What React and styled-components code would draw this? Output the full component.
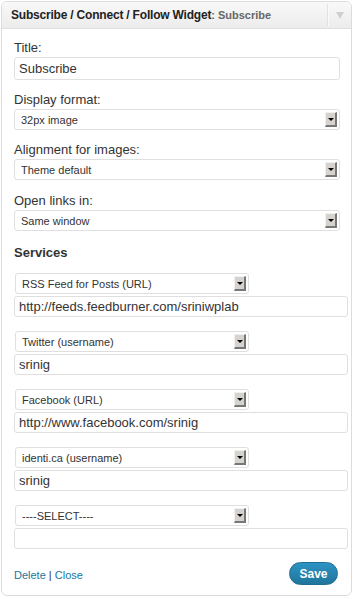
import styled, { createGlobalStyle } from "styled-components";

const GlobalStyle = createGlobalStyle`
  html, body {
    margin: 0;
    padding: 0;
    background: #fff;
    font-family: "Liberation Sans", Arial, sans-serif;
  }
`;

const Widget = styled.div`
  margin: 1px 2px 0 1px;
  border: 1px solid #dcdcdc;
  border-radius: 6px;
  background: #fff;
  overflow: hidden;
`;

const Header = styled.div`
  display: flex;
  height: 26px;
  background: linear-gradient(#f9f9f9, #ececec);
  border-bottom: 1px solid #dfdfdf;
`;

const HeaderTitle = styled.div`
  flex: 1;
  padding-left: 9px;
  line-height: 26px;
  font-size: 12px;
  font-weight: bold;
  letter-spacing: -0.2px;
  color: #222;
  white-space: nowrap;
`;

const HeaderSub = styled.span`
  font-size: 11px;
  letter-spacing: 0;
  color: #666;
`;

const Toggle = styled.div`
  width: 22px;
  border-left: 1px solid #fafafa;
  box-shadow: -1px 0 0 #e2e2e2;
  display: flex;
  align-items: center;
  justify-content: center;
  margin: 2px 0;

  &::after {
    content: "";
    border-left: 4px solid transparent;
    border-right: 4px solid transparent;
    border-top: 7px solid #cfcfcf;
  }
`;

const Body = styled.div`
  padding: 11px 12px 10px 12px;
  display: flex;
  flex-direction: column;
`;

const Field = styled.div`
  display: flex;
  flex-direction: column;
  gap: 2px;
  margin-bottom: ${(p) => p.$after || 12}px;
`;

const Label = styled.label`
  font-size: 13px;
  line-height: 15px;
  color: #333;
`;

const SectionTitle = styled.div`
  font-size: 13px;
  font-weight: bold;
  color: #333;
  line-height: 15px;
  margin-bottom: 13px;
`;

const Input = styled.div`
  box-sizing: border-box;
  height: ${(p) => p.$h || 21}px;
  width: ${(p) => p.$w || 326}px;
  border: 1px solid #dfdfdf;
  border-radius: 3px;
  padding: 0 4px;
  font-size: 13px;
  line-height: ${(p) => (p.$h || 21) - 2}px;
  color: #333;
`;

const Select = styled.div`
  box-sizing: border-box;
  height: 21px;
  width: ${(p) => p.$w || 326}px;
  margin-left: ${(p) => p.$indent || 0}px;
  border: 1px solid #dfdfdf;
  border-radius: 3px;
  padding: 0 2px 0 6px;
  display: flex;
  align-items: center;
  justify-content: space-between;
  font-size: 11px;
  color: #333;
`;

const Arrow = styled.span`
  box-sizing: border-box;
  width: 12px;
  height: 15px;
  background: #d6d3ce;
  border-top: 1px solid #f0f0f0;
  border-left: 1px solid #f0f0f0;
  border-right: 2px solid #777;
  border-bottom: 2px solid #777;
  display: flex;
  align-items: center;
  justify-content: center;

  &::after {
    content: "";
    border-left: 3px solid transparent;
    border-right: 3px solid transparent;
    border-top: 3px solid #000;
  }
`;

const Service = styled.div`
  display: flex;
  flex-direction: column;
  gap: 2px;
  margin-bottom: ${(p) => (p.$last ? 13 : 14)}px;
`;

const Footer = styled.div`
  display: flex;
  align-items: center;
  justify-content: space-between;
  padding-right: 1px;
`;

const Links = styled.div`
  font-size: 11px;
  color: #333;
  padding-top: 3px;
`;

const Link = styled.a`
  color: #21759b;
  text-decoration: none;
`;

const SaveButton = styled.button`
  width: 49px;
  height: 23px;
  border-radius: 12px;
  border: 1px solid #1f6d90;
  background: linear-gradient(#2c93c5, #21759b);
  color: #fff;
  font-family: "Liberation Sans", Arial, sans-serif;
  font-size: 12px;
  font-weight: bold;
  padding: 0;
`;

const services = [
  { name: "RSS Feed for Posts (URL)", value: "http://feeds.feedburner.com/sriniwplab" },
  { name: "Twitter (username)", value: "srinig" },
  { name: "Facebook (URL)", value: "http://www.facebook.com/srinig" },
  { name: "identi.ca (username)", value: "srinig" },
  { name: "----SELECT----", value: "" },
];

export default function App() {
  return (
    <>
      <GlobalStyle />
      <Widget>
        <Header>
          <HeaderTitle>
            Subscribe / Connect / Follow Widget<HeaderSub>: Subscribe</HeaderSub>
          </HeaderTitle>
          <Toggle />
        </Header>
        <Body>
          <Field>
            <Label>Title:</Label>
            <Input $h={23}>Subscribe</Input>
          </Field>
          <Field>
            <Label>Display format:</Label>
            <Select>
              32px image
              <Arrow />
            </Select>
          </Field>
          <Field $after={13}>
            <Label>Alignment for images:</Label>
            <Select>
              Theme default
              <Arrow />
            </Select>
          </Field>
          <Field $after={14}>
            <Label>Open links in:</Label>
            <Select>
              Same window
              <Arrow />
            </Select>
          </Field>
          <SectionTitle>Services</SectionTitle>
          {services.map((s, i) => (
            <Service key={i} $last={i === services.length - 1}>
              <Select $w={234} $indent={1}>
                {s.name}
                <Arrow />
              </Select>
              <Input $w={334}>{s.value}</Input>
            </Service>
          ))}
          <Footer>
            <Links>
              <Link href="#">Delete</Link> | <Link href="#">Close</Link>
            </Links>
            <SaveButton>Save</SaveButton>
          </Footer>
        </Body>
      </Widget>
    </>
  );
}
